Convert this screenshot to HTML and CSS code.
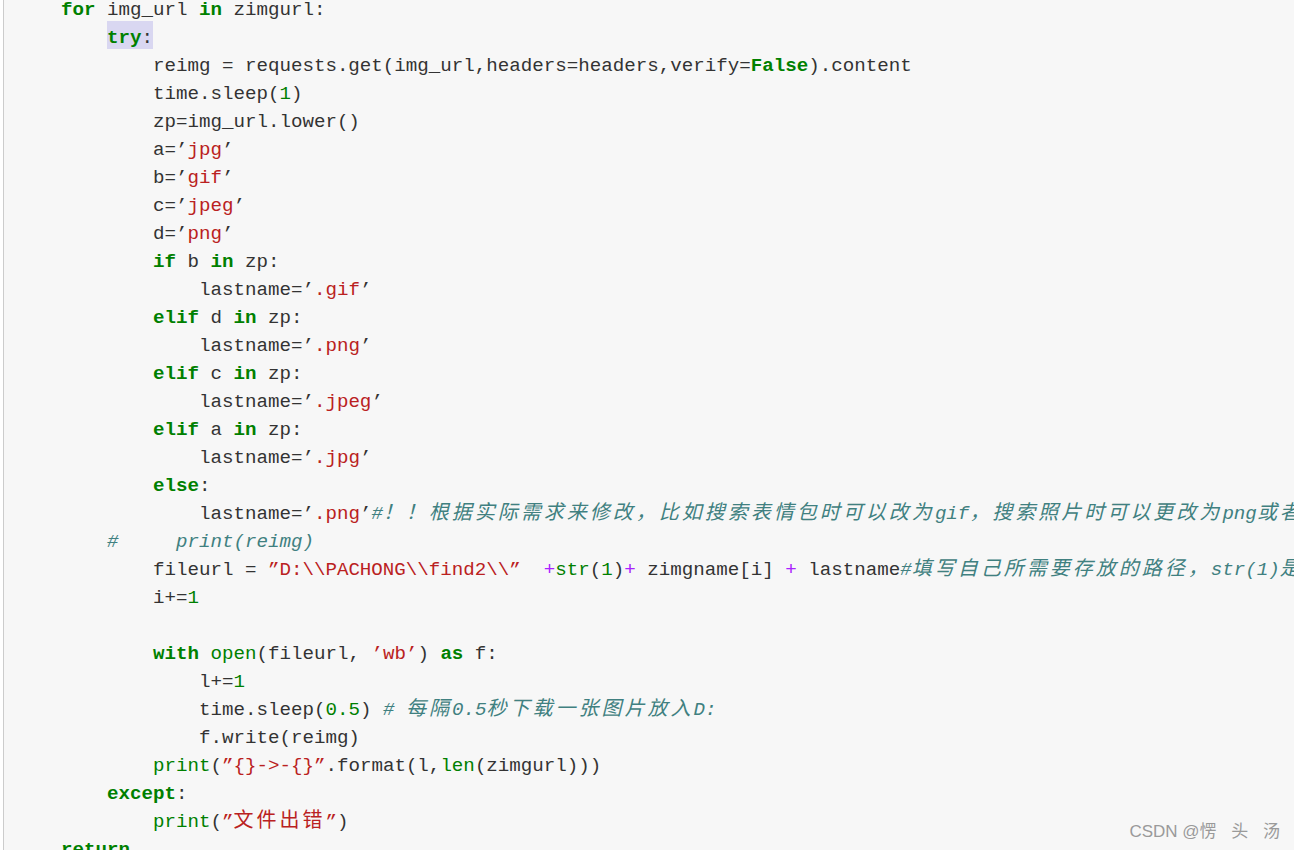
FILE: index.html
```html
<!DOCTYPE html>
<html lang="zh-CN">
<head>
<meta charset="utf-8">
<title>code</title>
<link rel="stylesheet" href="styles.css">
</head>
<body>
<div class="code">
<div class="l">    <span class="k">for</span> img_url <span class="k">in</span> zimgurl:</div>
<div class="l">        <span class="hl"><span class="k">try</span>:</span></div>
<div class="l">            reimg = requests.get(img_url,headers=headers,verify=<span class="k">False</span>).content</div>
<div class="l">            time.sleep(<span class="n">1</span>)</div>
<div class="l">            zp=img_url.lower()</div>
<div class="l">            a=’<span class="s">jpg</span>’</div>
<div class="l">            b=’<span class="s">gif</span>’</div>
<div class="l">            c=’<span class="s">jpeg</span>’</div>
<div class="l">            d=’<span class="s">png</span>’</div>
<div class="l">            <span class="k">if</span> b <span class="k">in</span> zp:</div>
<div class="l">                lastname=’<span class="s">.gif</span>’</div>
<div class="l">            <span class="k">elif</span> d <span class="k">in</span> zp:</div>
<div class="l">                lastname=’<span class="s">.png</span>’</div>
<div class="l">            <span class="k">elif</span> c <span class="k">in</span> zp:</div>
<div class="l">                lastname=’<span class="s">.jpeg</span>’</div>
<div class="l">            <span class="k">elif</span> a <span class="k">in</span> zp:</div>
<div class="l">                lastname=’<span class="s">.jpg</span>’</div>
<div class="l">            <span class="k">else</span>:</div>
<div class="l">                lastname=’<span class="s">.png</span>’<span class="c">#<span class="z">！！根据实际需求来修改，比如搜索表情包时可以改为</span>gif<span class="z">，搜索照片时可以更改为</span>png<span class="z">或者</span>jpg</span></div>
<div class="l">        <span class="c">#     print(reimg)</span></div>
<div class="l">            fileurl = <span class="s">”D:\\PACHONG\\find2\\”</span>  <span class="o">+</span><span class="b">str</span>(<span class="n">1</span>)<span class="o">+</span> zimgname[i] <span class="o">+</span> lastname<span class="c">#<span class="z">填写自己所需要存放的路径，</span>str(1)<span class="z">是文件夹的编号</span></span></div>
<div class="l">            i+=<span class="n">1</span></div>
<div class="l"> </div>
<div class="l">            <span class="k">with</span> <span class="b">open</span>(fileurl, <span class="s">’wb’</span>) <span class="k">as</span> f:</div>
<div class="l">                l+=<span class="n">1</span></div>
<div class="l">                time.sleep(<span class="n">0.5</span>) <span class="c"># <span class="z">每隔</span>0.5<span class="z">秒下载一张图片放入</span>D:</span></div>
<div class="l">                f.write(reimg)</div>
<div class="l">            <span class="b">print</span>(<span class="s">”{}-&gt;-{}”</span>.format(l,<span class="b">len</span>(zimgurl)))</div>
<div class="l">        <span class="k">except</span>:</div>
<div class="l">            <span class="b">print</span>(<span class="s">”<span class="z">文件出错</span>”</span>)</div>
<div class="l">    <span class="k">return</span></div>
</div>
<div class="wm">CSDN @<span class="wm-name">愣 头 汤</span></div>
</body>
</html>
```

FILE: styles.css
```css
html, body {
  margin: 0;
  padding: 0;
}
body {
  background: #ffffff;
  height: 850px;
  overflow: hidden;
  position: relative;
}
.code {
  margin: -4px 0 0 3px;
  border-left: 1px solid #cccccc;
  background: #f7f7f7;
  padding-left: 11px;
  font-family: "Liberation Mono", monospace;
  font-size: 19.17px;
  color: #333333;
  overflow: hidden;
}
.l {
  height: 28px;
  line-height: 28px;
  white-space: pre;
}
.k {
  color: #008000;
  font-weight: bold;
}
.b, .n {
  color: #008000;
}
.s {
  color: #ba2121;
}
.c {
  color: #408080;
  font-style: italic;
}
.o {
  color: #aa22ff;
}
.z {
  font-family: "Noto Sans CJK SC", sans-serif;
  font-size: 20px;
  line-height: 20px;
  letter-spacing: 3px;
}
.hl {
  background: #d9d7f1;
  padding-top: 6px;
}
.wm {
  position: absolute;
  right: 14px;
  bottom: 8px;
  font-family: "Liberation Sans", "Noto Sans CJK SC", sans-serif;
  font-size: 17px;
  color: #9a9a9a;
}
.wm-name {
  word-spacing: 10px;
}
```
